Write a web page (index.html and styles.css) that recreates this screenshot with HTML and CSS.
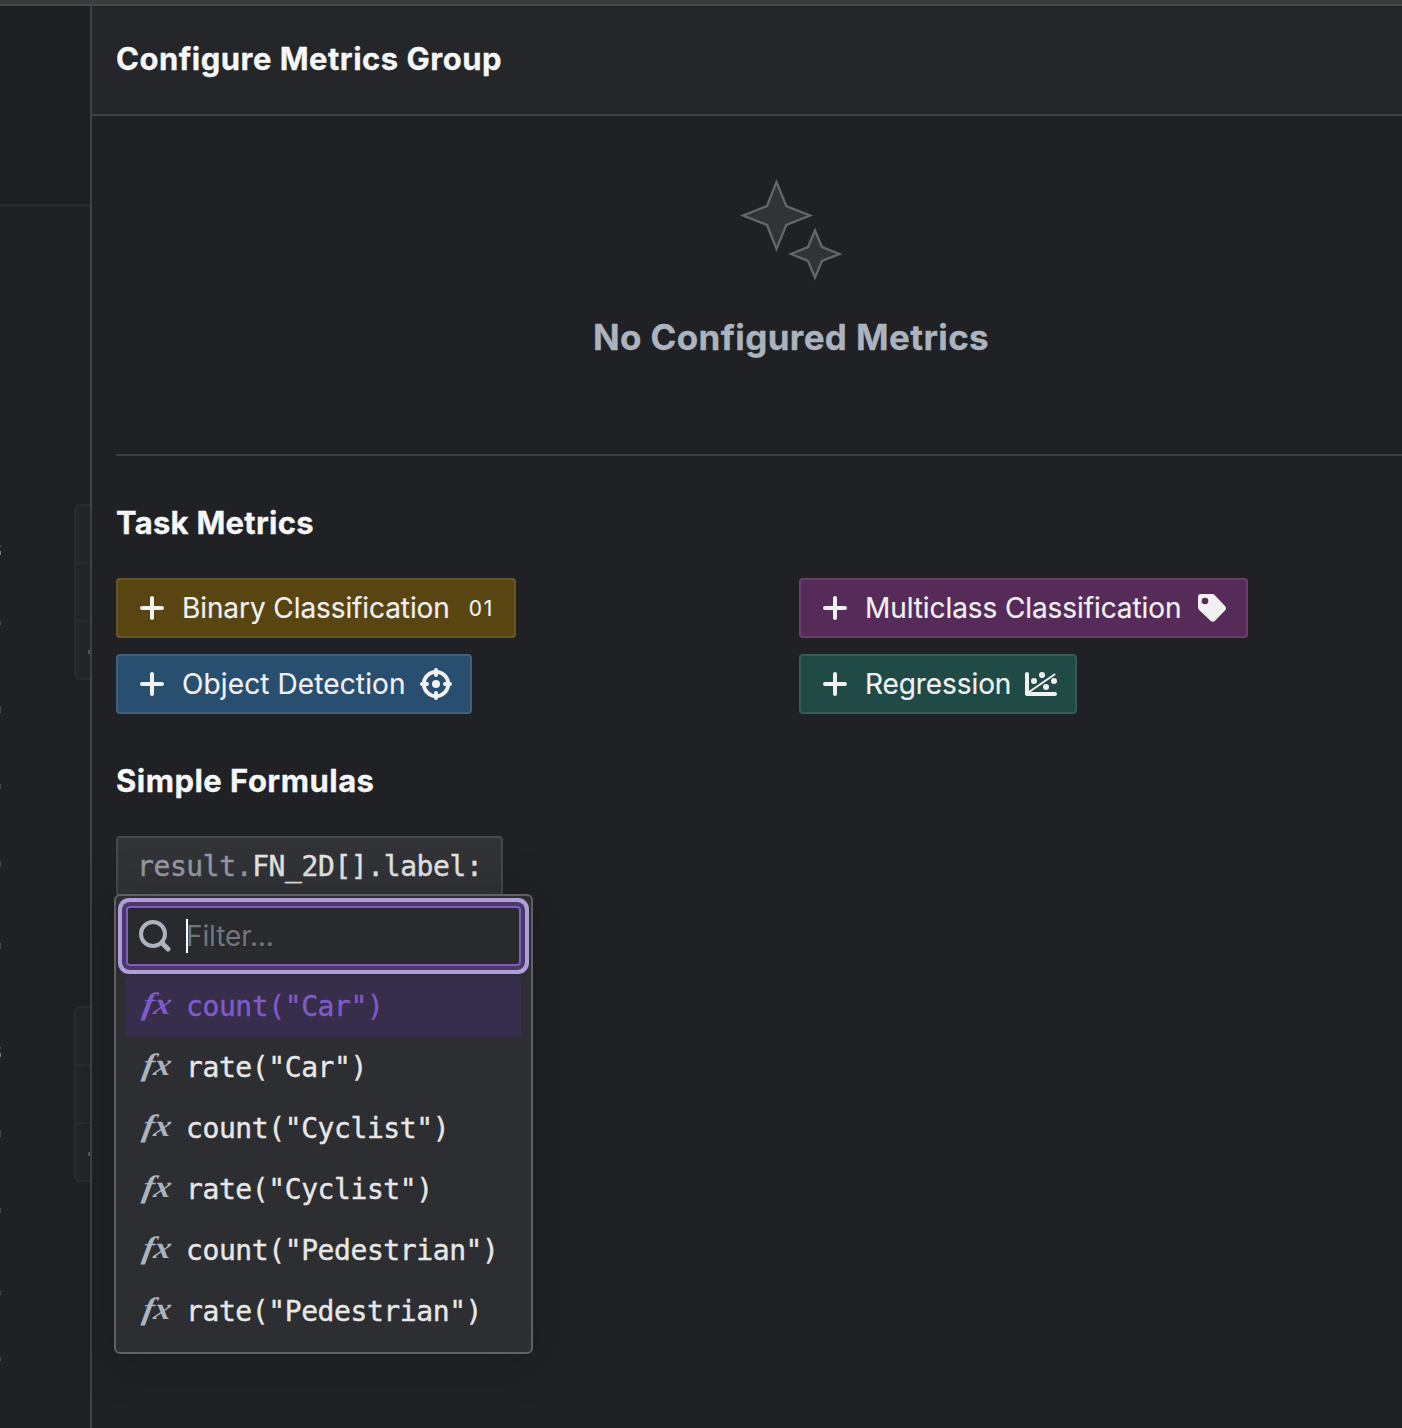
FILE: index.html
```html
<!DOCTYPE html>
<html lang="en">
<head>
<meta charset="utf-8">
<title>Configure Metrics Group</title>
<link rel="stylesheet" href="styles.css">
</head>
<body>
<div class="topbar"></div>
<div class="layout">
  <aside class="backdrop">
    <div class="backdrop-head"></div>
    <div class="backdrop-body">
      <div class="shade shade-a"></div>
      <div class="shade shade-b"></div>
      <div class="stack stack-a"><i></i><i></i><i></i></div>
      <div class="stack stack-b"><i></i><i></i><i></i></div>
      <svg class="edge" width="2" height="1222" viewBox="0 206 2 1222" fill="#48494b">
        <rect y="545" width="1" height="2"/><rect y="551" width="1" height="4" fill="#7b7c7e"/>
        <rect y="621" width="1" height="4"/><rect y="706" width="1" height="7"/>
        <rect y="784" width="1" height="5"/><rect y="861" width="1" height="6"/>
        <rect y="943" width="1" height="6"/><rect y="1047" width="1" height="2"/>
        <rect y="1053" width="1" height="4" fill="#7b7c7e"/><rect y="1130" width="1" height="7"/>
        <rect y="1208" width="1" height="5"/><rect y="1291" width="1" height="4"/><rect y="1357" width="1" height="4"/>
      </svg>
    </div>
  </aside>
  <main class="drawer">
    <header class="drawer-head"><h1 class="heading title">Configure Metrics Group</h1></header>
    <div class="content">
      <section class="empty">
        <svg class="sparkles" width="104" height="104" viewBox="739 178 104 104" fill="#323336" stroke="#65666a" stroke-width="2.300">
          <path d="M776.5 182 L786.3 206 L810 215.5 L786.3 225 L776.5 249 L767 225 L743 215.5 L767 206Z"/>
          <path d="M815 230.500 L822 247 L839.500 254 L822 261 L815 277.500 L808 261 L791 254 L808 247Z"/>
        </svg>
        <h2 class="heading empty-title">No Configured Metrics</h2>
      </section>
      <h2 class="heading task-title">Task Metrics</h2>
      <div class="tasks">
        <button class="btn gold"><svg class="plus" viewBox="0 0 24 24"><path d="M12 2v20M2 12h20"/></svg><span class="l-binary">Binary Classification</span><span class="digits">01</span></button>
        <button class="btn purple"><svg class="plus" viewBox="0 0 24 24"><path d="M12 2v20M2 12h20"/></svg><span class="l-multi">Multiclass Classification</span>
          <svg class="tag-icon" width="28" height="28" viewBox="0 0 28 28"><path fill="#f1f1f1" fill-rule="evenodd" d="M3 0h11q1.500 0 2.600 1.100L27 12q2 2.300 0 4.500L17 26.800q-2 2-4.500 0L1.200 16Q0 14.800 0 13V3Q0 0 3 0ZM7 3.700a3.300 3.300 0 1 0 0 6.600 3.300 3.300 0 0 0 0-6.600Z"/></svg></button>
        <button class="btn blue"><svg class="plus" viewBox="0 0 24 24"><path d="M12 2v20M2 12h20"/></svg><span class="l-object">Object Detection</span>
          <svg class="target-icon" width="32" height="32" viewBox="0 0 32 32" fill="none" stroke="#f1f1f1"><circle cx="16" cy="16" r="12.200" stroke-width="3.800"/><path d="M16 2v5M16 25v5M2 16h5M25 16h5" stroke-width="4" stroke-linecap="round"/><circle cx="16" cy="16" r="4" fill="#f1f1f1" stroke="none"/></svg></button>
        <button class="btn green"><svg class="plus" viewBox="0 0 24 24"><path d="M12 2v20M2 12h20"/></svg><span class="l-regr">Regression</span>
          <svg class="plot-icon" width="32" height="24" viewBox="0 0 32 24"><path d="M2 2v20h28" fill="none" stroke="#f1f1f1" stroke-width="4" stroke-linecap="round" stroke-linejoin="round"/><path d="M4 20 29.500 2.500" stroke="#f1f1f1" stroke-width="2" stroke-linecap="round"/><g fill="#f1f1f1"><circle cx="9" cy="9" r="3"/><circle cx="17" cy="3" r="3"/><circle cx="21" cy="15" r="3"/><circle cx="29" cy="9" r="3"/></g></svg></button>
      </div>
      <h2 class="heading formula-title">Simple Formulas</h2>
      <div class="formula">
        <div class="field mono"><span class="muted">result.</span>FN_2D[].label:</div>
        <div class="popover">
          <div class="filter">
            <svg class="search" width="32" height="32" viewBox="0 0 32 32" fill="none" stroke="#abb3bf"><circle cx="14" cy="14" r="12" stroke-width="4"/><path d="M23 23l6 6" stroke-width="5" stroke-linecap="round"/></svg>
            <span class="caret"></span><span class="placeholder">Filter...</span>
          </div>
          <div class="item mono active"><span class="fx">fx</span>count("Car")</div>
          <div class="item mono"><span class="fx">fx</span>rate("Car")</div>
          <div class="item mono"><span class="fx">fx</span>count("Cyclist")</div>
          <div class="item mono"><span class="fx">fx</span>rate("Cyclist")</div>
          <div class="item mono"><span class="fx">fx</span>count("Pedestrian")</div>
          <div class="item mono"><span class="fx">fx</span>rate("Pedestrian")</div>
        </div>
      </div>
    </div>
  </main>
</div>
</body>
</html>
```
FILE: styles.css
```css
* { box-sizing: border-box; }
body { margin: 0; width: 1402px; height: 1428px; overflow: hidden; background: #202124; font-family: Inter, "Liberation Sans", sans-serif; color: #f6f7f9; }
.topbar { height: 6px; background: #3c3c3c; border-bottom: 2px solid #48484a; }
.layout { display: flex; height: 1422px; }
.backdrop { flex: 0 0 90px; display: flex; flex-direction: column; overflow: hidden; background: #202122; }
.backdrop-head { height: 200px; flex: none; background: #1e1f23; border-bottom: 2px solid #2a2b2e; }
.backdrop-body { position: relative; flex: 1; }
.shade { position: absolute; left: 0; width: 50px; height: 87px; background: #202124; }
.shade-a { top: 298px; }
.shade-b { top: 800px; }
.stack { position: absolute; left: 74px; width: 30px; height: 176px; border: 2px solid #2b2c2f; border-radius: 6px; background: #242529; display: flex; flex-direction: column; }
.stack-a { top: 298px; }
.stack-b { top: 800px; }
.stack i { flex: none; height: 58px; border-bottom: 2px solid #2b2c2f; }
.stack i:last-child { height: 56px; border: 0; background: radial-gradient(circle at 14px 30px, #56575a 0 2px, transparent 2.500px); }
.edge { position: absolute; left: 0; top: 0; }
.drawer { flex: 1; min-width: 0; border-left: 2px solid #404148; background: #202125; }
.drawer-head { height: 110px; padding: 32px 24px 0; background: #25262a; border-bottom: 2px solid #3e3f46; }
.heading { margin: 0; font-size: 31px; line-height: 42px; font-weight: 700; white-space: nowrap; -webkit-text-stroke: .3px; }
.title { letter-spacing: 0.490px; }
.content { padding-left: 24px; }
.empty { height: 340px; padding: 62px 0 0 64px; display: flex; flex-direction: column; align-items: center; border-bottom: 2px solid #3e3f44; }
.empty-title { margin-top: 34px; font-size: 35px; letter-spacing: .380px; color: #abb3bf; }
.task-title { margin-top: 46px; letter-spacing: .270px; }
.tasks { margin-top: 34px; display: grid; grid-template-columns: 667px 1fr; gap: 16px; justify-items: start; }
.btn { height: 60px; padding: 0 0 0 22px; display: flex; align-items: center; border: 2px solid; border-radius: 4px; color: #f1f1f1; font: 400 28px/36px Inter, sans-serif; white-space: nowrap; text-align: left; -webkit-text-stroke: .15px; }
.plus { width: 24px; height: 24px; margin-right: 18px; flex: none; fill: none; stroke: #f1f1f1; stroke-width: 4; stroke-linecap: round; }
.l-binary, .l-multi, .l-regr { letter-spacing: -.090px; }
.l-object { letter-spacing: .120px; }
.gold { width: 400px; background: #594512; border-color: #6a5624; }
.purple { width: 449px; background: #562b5a; border-color: #693e6e; }
.blue { width: 356px; background: #284e70; border-color: #3c607f; }
.green { width: 278px; background: #204a45; border-color: #355d58; }
.digits { margin: 1px 0 0 19px; font-size: 21px; letter-spacing: 1.800px; }
.tag-icon { margin-left: 17px; }
.target-icon { margin-left: 14px; }
.plot-icon { margin-left: 14px; }
.formula-title { margin-top: 46px; letter-spacing: .480px; }
.formula { position: relative; margin-top: 34px; height: 60px; }
.mono { font-family: "DejaVu Sans Mono", monospace; font-size: 28px; letter-spacing: -0.410px; white-space: pre; -webkit-text-stroke: .4px; }
.field { width: 387px; height: 60px; padding-left: 19px; line-height: 58px; border: 2px solid #47484c; border-radius: 4px; background: #323337; color: #e4e4e4; }
.muted { color: #969aa3; }
.popover { position: absolute; left: -2px; top: 58px; width: 419px; height: 460px; padding: 10px; border: 2px solid #606165; border-radius: 6px; background: #2d2e31; box-shadow: 0 4px 48px rgba(16, 17, 19, .3); }
.filter { display: flex; align-items: center; height: 60px; margin-bottom: 10px; padding-left: 11px; border: 2px solid #7f5bc9; border-radius: 4px; background: #292a2d; box-shadow: 0 0 0 4px #483a63, 0 0 0 8px #b19ddb; }
.caret { width: 2px; height: 34px; margin-left: 15px; background: #fff; }
.placeholder { margin-left: -2px; font-size: 28px; letter-spacing: -.100px; color: #73767d; }
.item { display: flex; height: 61px; line-height: 62px; border-radius: 4px; color: #e7e7e7; }
.fx { width: 26px; margin: 0 16px 0 18px; font: italic 700 31px/56px "Liberation Serif", serif; letter-spacing: 0; -webkit-text-stroke: 0; transform: scaleX(1.1) skewX(-9deg); color: #abb3bf; }
.active, .active .fx { color: #7f5bc9; }
.active { background: #372e4c; }
```
